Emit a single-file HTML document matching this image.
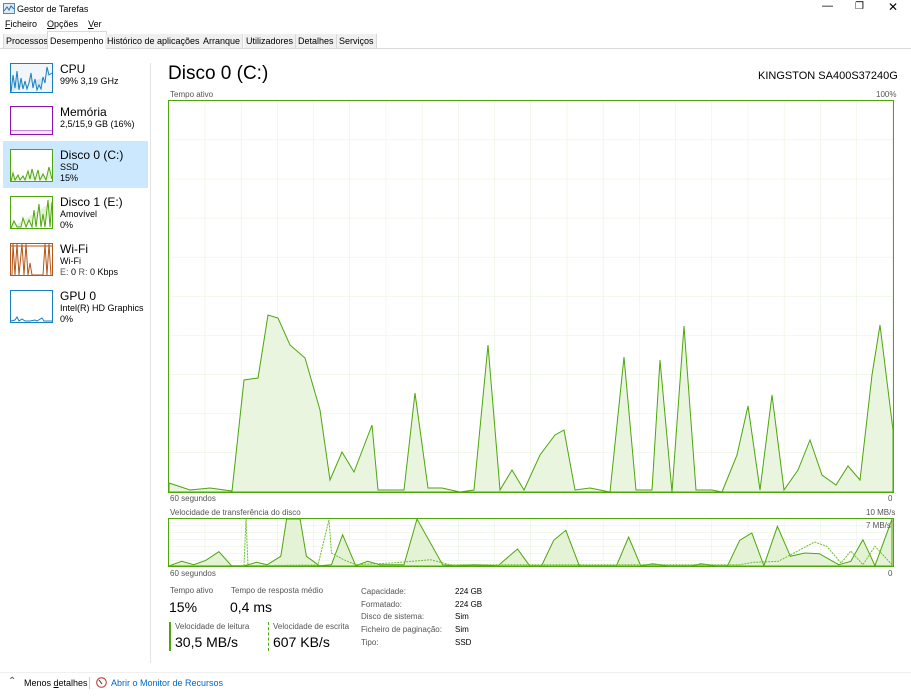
<!DOCTYPE html>
<html><head><meta charset="utf-8"><style>
*{margin:0;padding:0;box-sizing:border-box}
body{width:911px;height:700px;background:#fff;font-family:"Liberation Sans",sans-serif;color:#000;position:relative;overflow:hidden;font-size:9px}
.a{position:absolute;white-space:nowrap}
.tab{position:absolute;top:34px;height:14px;font-size:9px;padding:2px 2px;border-right:1px solid #d9d9d9;color:#000}
.g{color:#555}
</style></head><body>
<svg class="a" style="left:3px;top:3px" width="12" height="11"><rect x="0.5" y="0.5" width="11" height="10" fill="#dfeaf5" stroke="#5a87b8"/><polyline points="1,8 4,4 6,7 8,3 11,6" fill="none" stroke="#2b6db3"/></svg>
<div class="a" style="left:17px;top:4px;font-size:9px">Gestor de Tarefas</div>
<div class="a" style="left:822px;top:0px;font-size:11px">&#8212;</div>
<div class="a" style="left:855px;top:1px;font-size:10px">&#10064;</div>
<div class="a" style="left:888px;top:0px;font-size:12px">&#10005;</div>
<div class="a" style="left:5px;top:19px"><u>F</u>icheiro &nbsp;&nbsp; <u>O</u>pções &nbsp;&nbsp; <u>V</u>er</div>
<div class="a" style="left:0;top:48px;width:911px;height:1px;background:#d9d9d9"></div>
<div class="tab" style="left:3px;border-left:1px solid #d9d9d9;background:#f0f0f0">Processos</div>
<div class="tab" style="left:47px;top:31px;height:18px;padding-top:4px;background:#fff;border-left:1px solid #d9d9d9;border-top:1px solid #d9d9d9">Desempenho</div>
<div class="tab" style="left:105px;background:#f0f0f0">Histórico de aplicações</div>
<div class="tab" style="left:201px;background:#f0f0f0">Arranque</div>
<div class="tab" style="left:244px;background:#f0f0f0">Utilizadores</div>
<div class="tab" style="left:296px;background:#f0f0f0">Detalhes</div>
<div class="tab" style="left:337px;background:#f0f0f0">Serviços</div>
<div class="a" style="left:150px;top:63px;width:1px;height:600px;background:#e3e3e3"></div>
<div class="a" style="left:3px;top:141px;width:145px;height:47px;background:#cce8ff"></div>
<svg class="a" style="left:10px;top:63px" width="43" height="30"><rect x="0.5" y="0.5" width="42" height="29" fill="#f1f6fb" stroke="#1a7fc1"/><polyline points="1,29 3,12 5,25 7,8 9,27 11,15 13,26 15,18 17,26 19,20 21,10 23,25 25,16 27,27 29,22 31,26 33,14 35,20 37,4 39,12 42,10" fill="#d5e7f5" stroke="#1a7fc1"/></svg>
<div class="a" style="left:60px;top:62px;font-size:12px">CPU</div>
<div class="a" style="left:60px;top:76px">99% 3,19 GHz</div>
<svg class="a" style="left:10px;top:106px" width="43" height="29"><rect x="0.5" y="0.5" width="42" height="28" fill="#fff" stroke="#8b12ae"/><polyline points="1,25 42,25" stroke="#8b12ae" fill="none"/><rect x="1" y="25" width="41" height="3" fill="#f2e3f7"/></svg>
<div class="a" style="left:60px;top:105px;font-size:12px">Memória</div>
<div class="a" style="left:60px;top:119px">2,5/15,9 GB (16%)</div>
<svg class="a" style="left:10px;top:149px" width="43" height="33"><rect x="0.5" y="0.5" width="42" height="32" fill="#fff" stroke="#4da60c"/><polyline points="1,32 3,24 5,31 8,26 10,31 13,27 15,31 18,22 20,30 22,20 25,31 28,21 30,31 33,25 36,31 39,18 42,30" fill="#e4f3d6" stroke="#4da60c"/></svg>
<div class="a" style="left:60px;top:148px;font-size:12px">Disco 0 (C:)</div>
<div class="a" style="left:60px;top:162px">SSD</div>
<div class="a" style="left:60px;top:173px">15%</div>
<svg class="a" style="left:10px;top:196px" width="43" height="33"><rect x="0.5" y="0.5" width="42" height="32" fill="#fff" stroke="#4da60c"/><polyline points="1,32 4,25 7,31 11,31 13,22 16,31 19,24 22,31 24,14 26,31 29,8 31,31 33,18 35,31 38,4 40,31 42,6" fill="#e4f3d6" stroke="#4da60c"/></svg>
<div class="a" style="left:60px;top:195px;font-size:12px">Disco 1 (E:)</div>
<div class="a" style="left:60px;top:209px">Amovível</div>
<div class="a" style="left:60px;top:220px">0%</div>
<svg class="a" style="left:10px;top:243px" width="43" height="33"><rect x="0.5" y="0.5" width="42" height="32" fill="#fff" stroke="#b3561a"/><line x1="1" y1="3" x2="42" y2="3" stroke="#b3561a"/><polyline points="2,32 3,1 5,32 7,1 9,32 12,1 14,32 16,1 18,32 20,20 22,32 33,32 35,1 37,32 39,1 41,32" fill="none" stroke="#b3561a"/></svg>
<div class="a" style="left:60px;top:242px;font-size:12px">Wi-Fi</div>
<div class="a" style="left:60px;top:256px">Wi-Fi</div>
<div class="a" style="left:60px;top:267px"><span class="g">E:</span> 0 <span class="g">R:</span> 0 Kbps</div>
<svg class="a" style="left:10px;top:290px" width="43" height="33"><rect x="0.5" y="0.5" width="42" height="32" fill="#fff" stroke="#1a7fc1"/><polyline points="1,31 5,30 7,27 9,31 12,29 15,31 20,31 25,30 27,31 32,28 34,31 42,31" fill="none" stroke="#1a7fc1"/></svg>
<div class="a" style="left:60px;top:289px;font-size:12px">GPU 0</div>
<div class="a" style="left:60px;top:303px">Intel(R) HD Graphics</div>
<div class="a" style="left:60px;top:314px">0%</div>
<div class="a" style="left:168px;top:63px;font-size:19px">Disco 0 (C:)</div>
<div class="a" style="left:758px;top:70px;font-size:11px">KINGSTON SA400S37240G</div>
<div class="a g" style="left:170px;top:90px;font-size:8px">Tempo ativo</div>
<div class="a g" style="left:876px;top:90px;font-size:8px">100%</div>
<svg class="a" style="left:168px;top:100px" width="727" height="394">
<defs><pattern id="gp" width="36.2" height="39.1" patternUnits="userSpaceOnUse" x="1" y="1"><path d="M36.2 0V39.1M0 39.1H36.2" fill="none" stroke="#e6f0da" stroke-width="1"/></pattern></defs>
<rect x="1" y="1" width="724" height="391" fill="url(#gp)"/>
<polygon fill="#e9f5df" stroke="#4da60c" stroke-width="1" points="1,392 1,383 22,390 42,388 64,391 76,280 90,278 100,215 110,218 122,245 137,258 152,310 162,380 174,352 186,372 204,325 210,390 236,390 247,293 260,388 274,388 292,392 306,390 320,245 332,390 344,370 356,390 372,355 387,335 396,330 407,390 422,388 442,392 456,257 468,390 484,390 492,260 504,392 516,226 528,390 544,390 554,392 569,355 580,306 592,390 604,295 616,390 630,370 642,340 654,375 668,385 680,366 692,380 704,275 712,225 725,330 725,392"/>
<rect x="0.5" y="0.5" width="725" height="392" fill="none" stroke="#4da60c"/>
</svg>
<div class="a g" style="left:170px;top:494px;font-size:8px">60 segundos</div>
<div class="a g" style="left:888px;top:494px;font-size:8px">0</div>
<div class="a g" style="left:170px;top:508px;font-size:8px">Velocidade de transferência do disco</div>
<div class="a g" style="left:866px;top:508px;font-size:8px">10 MB/s</div>
<svg class="a" style="left:168px;top:518px" width="727" height="50">
<defs><pattern id="gp2" width="36.2" height="7" patternUnits="userSpaceOnUse" x="1" y="1"><path d="M36.2 0V7M0 7H36.2" fill="none" stroke="#e6f0da"/></pattern></defs>
<rect x="1" y="1" width="724" height="47" fill="url(#gp2)"/>
<polygon fill="#e4f3d6" stroke="#4da60c" points="1,48 1.7,47.7 13.7,43.3 25.8,46.7 37.9,42.3 50.9,33.7 63.5,47.7 76.5,47.7 88.6,44.3 99.2,46.7 112.8,38.3 118.6,1 132.1,1 138.4,38.3 151.4,47.7 163.5,46.7 174.6,16.7 187.7,47.7 199.7,43.3 211.8,46.7 236,46.7 249,1 274.6,46.7 286.7,47.7 306,46.7 330,47.7 349.5,31 361.6,47.7 373.6,47.7 385.7,22.3 397.8,12.3 411.3,47.7 448.5,47.7 460.6,19 472.7,47.7 484.8,45.7 499.2,47.7 523.4,47.7 533,45.7 547.5,47.7 559.6,47.7 571.7,22.3 583.8,15 595.9,47.7 609.4,8.3 622.4,38.3 636.9,35 651.4,35.7 670.7,46.7 682.8,43.3 694.9,21.7 707,47.7 724,1 724,48"/>
<polyline fill="none" stroke="#6bbf2a" stroke-dasharray="2,1" points="1,47.7 76,47.7 78,1 80,47.7 150,47 161,1.7 163.5,35 175.6,41.7 187.7,46.7 223.9,45 262.5,41.7 281.9,46.7 571.7,46.7 586,44.3 610.4,43.3 646.6,24 658.7,28.3 673.1,45 682.8,33 694.9,46.7 707,28.3 724,46.7"/>
<rect x="0.5" y="0.5" width="725" height="48" fill="none" stroke="#4da60c"/>
</svg>
<div class="a g" style="left:866px;top:521px;font-size:8px">7 MB/s</div>
<div class="a g" style="left:170px;top:569px;font-size:8px">60 segundos</div>
<div class="a g" style="left:888px;top:569px;font-size:8px">0</div>
<div class="a g" style="left:170px;top:586px;font-size:8px">Tempo ativo</div>
<div class="a g" style="left:231px;top:586px;font-size:8px">Tempo de resposta médio</div>
<div class="a" style="left:169px;top:599px;font-size:14px">15%</div>
<div class="a" style="left:230px;top:599px;font-size:14px">0,4 ms</div>
<div class="a" style="left:169px;top:622px;width:2px;height:29px;background:#4da60c"></div>
<div class="a" style="left:268px;top:622px;width:0;height:29px;border-left:1px dashed #4da60c"></div>
<div class="a g" style="left:175px;top:622px;font-size:8px">Velocidade de leitura</div>
<div class="a g" style="left:273px;top:622px;font-size:8px">Velocidade de escrita</div>
<div class="a" style="left:175px;top:634px;font-size:14px">30,5 MB/s</div>
<div class="a" style="left:273px;top:634px;font-size:14px">607 KB/s</div>
<div class="a g" style="left:361px;top:586px;font-size:8px;line-height:12.7px">Capacidade:<br>Formatado:<br>Disco de sistema:<br>Ficheiro de paginação:<br>Tipo:</div>
<div class="a" style="left:455px;top:586px;font-size:8px;line-height:12.7px">224 GB<br>224 GB<br>Sim<br>Sim<br>SSD</div>
<div class="a" style="left:0;top:672px;width:911px;height:1px;background:#f0f0f0"></div>
<div class="a" style="left:8px;top:676px;font-size:10px;color:#555">&#8963;</div>
<div class="a" style="left:24px;top:678px">Menos <u>d</u>etalhes</div>
<div class="a" style="left:89px;top:677px;width:1px;height:12px;background:#ccc"></div>
<svg class="a" style="left:96px;top:677px" width="11" height="11"><circle cx="5.5" cy="5.5" r="4.8" fill="#fff" stroke="#b33"/><line x1="3" y1="3" x2="6" y2="7" stroke="#333"/></svg>
<div class="a" style="left:111px;top:678px;color:#0066cc">Abrir o Monitor de Recursos</div>
</body></html>
